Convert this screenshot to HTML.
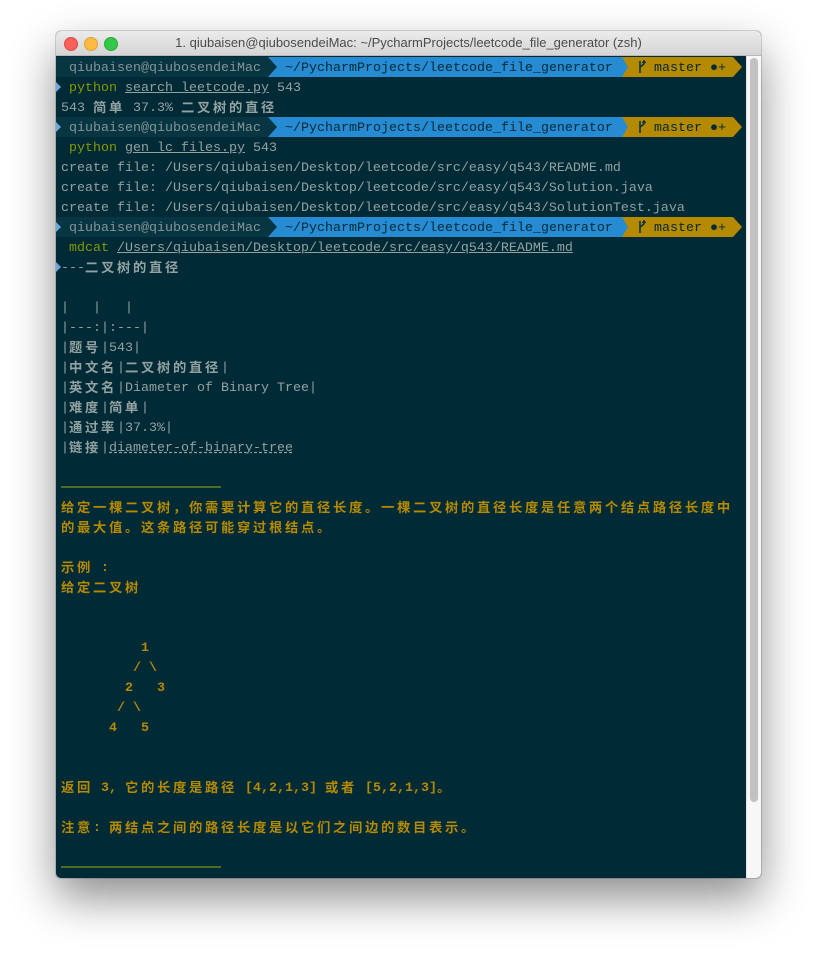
<!DOCTYPE html>
<html><head><meta charset="utf-8"><style>
html,body{margin:0;padding:0;background:#fff;width:817px;height:959px;overflow:hidden;position:relative}
.win{position:absolute;left:56px;top:31px;width:705px;height:847px;border-radius:5px;background:#002b36;box-shadow:0 20px 45px rgba(0,0,0,.45),0 0 0 1px rgba(0,0,0,.15);overflow:hidden}
.tb{position:absolute;left:0;top:0;width:705px;height:24px;background:linear-gradient(#ebebeb,#d5d5d5);border-bottom:1px solid #b8b8b8;font:13px "Liberation Sans",sans-serif;color:#4a4a4a;text-align:center;line-height:24px}
.dot{position:absolute;top:6px;width:12px;height:12px;border-radius:50%}
.track{position:absolute;left:690px;top:25px;width:15px;height:822px;background:#f7f7f7;border-left:1px solid #e4e4e4}
.thumb{position:absolute;left:694px;top:27px;width:8px;height:744px;background:#c1c1c1;border-radius:4px}
.t{position:absolute;left:61px;top:59px;font:13.333px/20px "Liberation Mono","Noto Sans CJK SC",monospace;color:#93a1a1}
.t div{height:20px;line-height:20px;overflow:visible;white-space:pre}
.c{letter-spacing:2.67px;font-family:"Noto Sans CJK SC",sans-serif;font-weight:bold;line-height:20px;display:inline-block;height:20px;vertical-align:top;position:relative;top:-2px}
.y{color:#b58900;font-weight:bold}
.g{color:#859900}
.u{text-decoration:underline}
.dash{text-decoration:underline dashed}
.seg{position:absolute;height:20px;font:13.333px/20px "Liberation Mono",monospace;white-space:pre}
.segt{top:2px}
.rule{position:absolute;left:61px;width:160px;height:2px;background:#4f6a23}
.tri{position:absolute;left:56px;width:0;height:0;border-top:5px solid transparent;border-bottom:5px solid transparent;border-left:5px solid #6fa8dc}
</style></head><body>
<div class="win">
<div class="tb">1. qiubaisen@qiubosendeiMac: ~/PycharmProjects/leetcode_file_generator (zsh)
<div class="dot" style="left:8px;background:#fc605b;border:.5px solid #de4a45"></div>
<div class="dot" style="left:28px;background:#fdbc40;border:.5px solid #dea034"></div>
<div class="dot" style="left:48px;background:#34c84a;border:.5px solid #27aa35"></div>
</div>
<div class="track"></div><div class="thumb"></div>
</div>

<div style="position:absolute;left:0;top:57px">
 <div class="seg" style="left:622px;top:0;width:111px;background:#b58900"></div>
 <div class="seg" style="left:733px;top:0;width:9px;background:#b58900;clip-path:polygon(0 0,100% 50%,0 100%)"></div>
 <div class="seg" style="left:268px;top:0;width:360px;background:#268bd2;clip-path:polygon(0 0,354px 0,100% 50%,354px 100%,0 100%)"></div>
 <div class="seg" style="left:56px;top:0;width:221px;background:#073642;clip-path:polygon(0 0,212px 0,100% 50%,212px 100%,0 100%)"></div>
 <div class="seg segt" style="left:61px;color:#839496"> qiubaisen@qiubosendeiMac </div>
 <div class="seg segt" style="left:277px;color:#002b36"> ~/PycharmProjects/leetcode_file_generator</div>
 <div class="seg segt" style="left:630px;color:#002b36">   master ●+</div>
 <svg style="position:absolute;left:637px;top:3px" width="10" height="14"><path d="M3 1V13M3 8C3 5 7 6 7 3V1M5.5 3L7 1 8.5 3" stroke="#073642" stroke-width="1.6" fill="none"/></svg>
</div>
<div style="position:absolute;left:0;top:117px">
 <div class="seg" style="left:622px;top:0;width:111px;background:#b58900"></div>
 <div class="seg" style="left:733px;top:0;width:9px;background:#b58900;clip-path:polygon(0 0,100% 50%,0 100%)"></div>
 <div class="seg" style="left:268px;top:0;width:360px;background:#268bd2;clip-path:polygon(0 0,354px 0,100% 50%,354px 100%,0 100%)"></div>
 <div class="seg" style="left:56px;top:0;width:221px;background:#073642;clip-path:polygon(0 0,212px 0,100% 50%,212px 100%,0 100%)"></div>
 <div class="seg segt" style="left:61px;color:#839496"> qiubaisen@qiubosendeiMac </div>
 <div class="seg segt" style="left:277px;color:#002b36"> ~/PycharmProjects/leetcode_file_generator</div>
 <div class="seg segt" style="left:630px;color:#002b36">   master ●+</div>
 <svg style="position:absolute;left:637px;top:3px" width="10" height="14"><path d="M3 1V13M3 8C3 5 7 6 7 3V1M5.5 3L7 1 8.5 3" stroke="#073642" stroke-width="1.6" fill="none"/></svg>
</div>
<div style="position:absolute;left:0;top:217px">
 <div class="seg" style="left:622px;top:0;width:111px;background:#b58900"></div>
 <div class="seg" style="left:733px;top:0;width:9px;background:#b58900;clip-path:polygon(0 0,100% 50%,0 100%)"></div>
 <div class="seg" style="left:268px;top:0;width:360px;background:#268bd2;clip-path:polygon(0 0,354px 0,100% 50%,354px 100%,0 100%)"></div>
 <div class="seg" style="left:56px;top:0;width:221px;background:#073642;clip-path:polygon(0 0,212px 0,100% 50%,212px 100%,0 100%)"></div>
 <div class="seg segt" style="left:61px;color:#839496"> qiubaisen@qiubosendeiMac </div>
 <div class="seg segt" style="left:277px;color:#002b36"> ~/PycharmProjects/leetcode_file_generator</div>
 <div class="seg segt" style="left:630px;color:#002b36">   master ●+</div>
 <svg style="position:absolute;left:637px;top:3px" width="10" height="14"><path d="M3 1V13M3 8C3 5 7 6 7 3V1M5.5 3L7 1 8.5 3" stroke="#073642" stroke-width="1.6" fill="none"/></svg>
</div>

<div class="tri" style="top:82px"></div>
<div class="tri" style="top:122px"></div>
<div class="tri" style="top:222px"></div>
<div class="tri" style="top:262px"></div>

<div class="t"><div></div><div> <span class="g">python</span> <span class="u">search_leetcode.py</span> 543</div><div>543 <span class="c">简单</span> 37.3% <span class="c">二叉树的直径</span></div><div></div><div> <span class="g">python</span> <span class="u">gen_lc_files.py</span> 543</div><div>create file: /Users/qiubaisen/Desktop/leetcode/src/easy/q543/README.md</div><div>create file: /Users/qiubaisen/Desktop/leetcode/src/easy/q543/Solution.java</div><div>create file: /Users/qiubaisen/Desktop/leetcode/src/easy/q543/SolutionTest.java</div><div></div><div> <span class="g">mdcat</span> <span class="u">/Users/qiubaisen/Desktop/leetcode/src/easy/q543/README.md</span></div><div>---<span class="c">二叉树的直径</span></div><div></div><div>|   |   |</div><div>|---:|:---|</div><div>|<span class="c">题号</span>|543|</div><div>|<span class="c">中文名</span>|<span class="c">二叉树的直径</span>|</div><div>|<span class="c">英文名</span>|Diameter of Binary Tree|</div><div>|<span class="c">难度</span>|<span class="c">简单</span>|</div><div>|<span class="c">通过率</span>|37.3%|</div><div>|<span class="c">链接</span>|<span class="dash">diameter-of-binary-tree</span></div><div></div><div></div><div class="y"><span class="c">给定一棵二叉树，你需要计算它的直径长度。一棵二叉树的直径长度是任意两个结点路径长度中</span></div><div class="y"><span class="c">的最大值。这条路径可能穿过根结点。</span></div><div></div><div class="y"><span class="c">示例</span> :</div><div class="y"><span class="c">给定二叉树</span></div><div></div><div></div><div class="y">          1</div><div class="y">         / \</div><div class="y">        2   3</div><div class="y">       / \</div><div class="y">      4   5</div><div></div><div></div><div class="y"><span class="c">返回</span> 3, <span class="c">它的长度是路径</span> [4,2,1,3] <span class="c">或者</span> [5,2,1,3]<span class="c">。</span></div><div></div><div class="y"><span class="c">注意</span>: <span class="c">两结点之间的路径长度是以它们之间边的数目表示。</span></div></div>
<div class="rule" style="top:486px"></div>
<div class="rule" style="top:866px"></div>
</body></html>
